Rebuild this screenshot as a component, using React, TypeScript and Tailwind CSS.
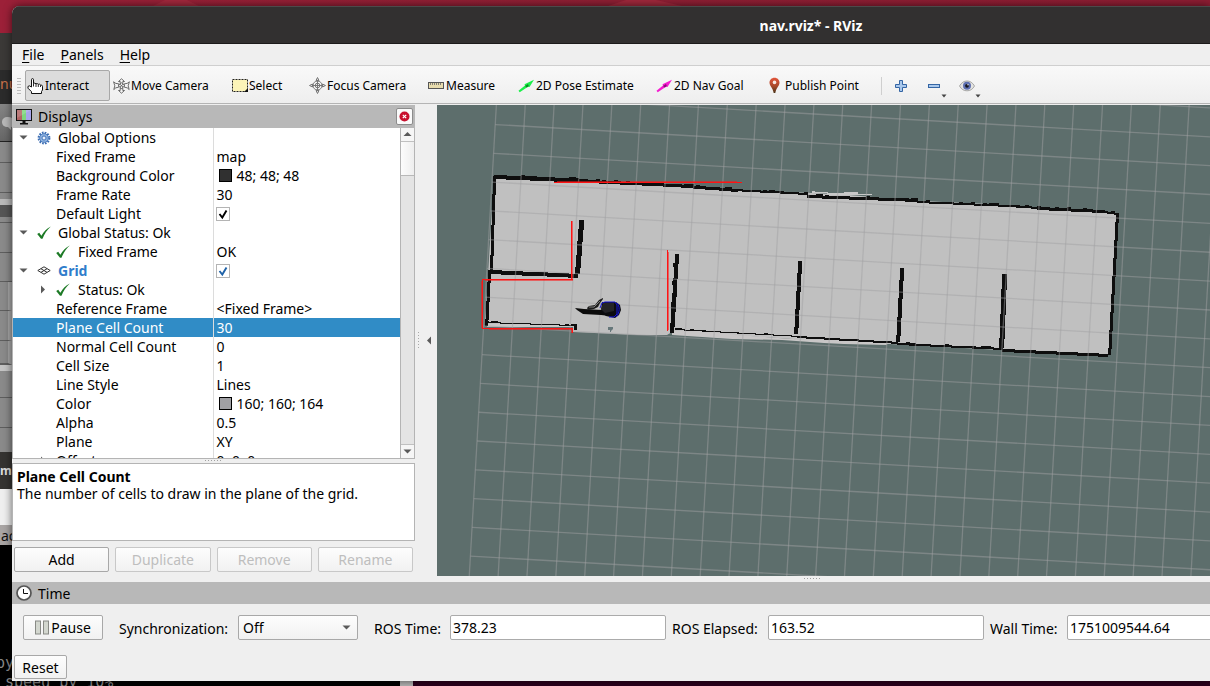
import React from "react";

/* ---------- small icons ---------- */

function HandIcon() {
  return (
    <svg width="16" height="16" viewBox="0 0 16 16" className="shrink-0">
      <path
        d="M4.500 9V1.600a1 1 0 0 1 2 0V5.500q1.300-.9 2.500.3 1.400-.7 2.300.5 1.400-.6 2.200.7 1.600-.3 2 1.200V12l-1 1.500v2H4.500v-1.800L1 10.200Q.2 8 2.300 7.800z"
        fill="#fff"
        stroke="#111"
        strokeWidth="1"
      />
      <path d="M9 6v3M11.300 6.500V9M13.500 7.200V9M6.500 5.500V8.500" stroke="#111" strokeWidth="0.900" />
    </svg>
  );
}

function MoveIcon() {
  return (
    <svg width="17" height="16" viewBox="0 0 17 16" className="shrink-0" fill="#f4f4f4" stroke="#5c5c5c" strokeWidth="0.900">
      <path d="M8.500.8l3 2.700H9.800v2.300H7.200V3.500H5.500zM8.500 15.200l3-2.700H9.800v-2.300H7.200v2.300H5.500z" />
      <path d="M.6 3.800l2.200 1.600 2.900.4v3.400l-2.900.6L.8 11.600 1.800 7.800zM16.400 3.800l-2.200 1.600-2.900.4v3.400l2.900.6 2 1.800-1-3.800z" />
      <path d="M8.500 4.800l3.200 2.900-3.200 2.900-3.200-2.900z" />
      <path d="M6.900 6.200l3.200 3M10.100 6.200l-3.200 3" />
    </svg>
  );
}

function SelectIcon() {
  return (
    <svg width="17" height="14" viewBox="0 0 17 14" className="shrink-0">
      <rect x="1.500" y="0.500" width="15" height="12" fill="#fcf4b8" stroke="#222" strokeDasharray="2 1" />
      <path d="M17 9v4h-4z" fill="#111" />
    </svg>
  );
}

function FocusIcon() {
  return (
    <svg width="17" height="17" viewBox="0 0 17 17" className="shrink-0" fill="none" stroke="#777" strokeWidth="1">
      <circle cx="8.500" cy="8.500" r="4.500" />
      <circle cx="8.500" cy="8.500" r="2.300" />
      <path d="M8.500 3v11M3 8.500h11" />
      <path d="M8.500.5L7 3.500h3zM8.500 16.500L7 13.500h3zM.5 8.500L3.500 7v3zM16.500 8.500L13.500 7v3z" fill="#ddd" />
    </svg>
  );
}

function RulerIcon() {
  return (
    <svg width="16" height="7" viewBox="0 0 16 7" className="shrink-0">
      <rect x="0.500" y="0.500" width="15" height="6" fill="#e8dcae" stroke="#555" />
      <path d="M2.500 1v2M4.500 1v2M6.500 1v2M8.500 1v2M10.500 1v2M12.500 1v2" stroke="#666" strokeWidth="0.800" />
    </svg>
  );
}

function ArrowIcon({ color, dark }: { color: string; dark: string }) {
  return (
    <svg width="17" height="14" viewBox="0 0 17 14" className="shrink-0">
      <path d="M.5 11.800L7 6.500 6.500 5.200 16 .8 11.500 8 10 7.700 1.700 13.300z" fill={color} />
      <path d="M7 7l3-2 .8 2-2 1.600z" fill={dark} />
    </svg>
  );
}

function PinIcon() {
  return (
    <svg width="16" height="17" viewBox="0 0 16 17" className="shrink-0">
      <defs>
        <linearGradient id="pin" x1="0" y1="0" x2="0" y2="1">
          <stop offset="0" stopColor="#e2553a" />
          <stop offset="0.550" stopColor="#a8492a" />
          <stop offset="1" stopColor="#4a3418" />
        </linearGradient>
      </defs>
      <path d="M7.500.8c3 0 5 2.200 5 5 0 3-3.300 5-4.200 10.200H6.700C5.800 10.800 2.500 8.800 2.500 5.800c0-2.800 2-5 5-5z" fill="url(#pin)" />
      <circle cx="7.500" cy="5.400" r="1.800" fill="#f6e8e2" />
    </svg>
  );
}

function PlusIcon() {
  return (
    <svg width="14" height="14" viewBox="0 0 14 14">
      <path d="M5.500 1.500h3v4h4v3h-4v4h-3v-4h-4v-3h4z" fill="#a9c8ec" stroke="#3465a4" />
    </svg>
  );
}

function MinusIcon() {
  return (
    <svg width="14" height="14" viewBox="0 0 14 14">
      <rect x="1.500" y="5.500" width="11" height="3" fill="#a9c8ec" stroke="#3465a4" />
    </svg>
  );
}

function EyeIcon() {
  return (
    <svg width="16" height="12" viewBox="0 0 16 12">
      <path d="M.5 6C2.500 2.500 5 1 8 1s5.500 1.500 7.500 5C13.500 9.500 11 10.800 8 10.800S2.500 9.500.5 6z" fill="#e4e4e2" stroke="#a6a6a4" />
      <circle cx="8" cy="5.800" r="4" fill="#5d6fb0" />
      <circle cx="8" cy="5.800" r="1.900" fill="#15151f" />
      <circle cx="9" cy="4.800" r="0.700" fill="#fff" />
    </svg>
  );
}

function DisplaysIcon() {
  return (
    <svg width="16" height="16" viewBox="0 0 16 16">
      <rect x="0.500" y="0.500" width="15" height="11" fill="#111" stroke="#111" />
      <rect x="1" y="1" width="5" height="10" fill="#b06464" />
      <rect x="6" y="1" width="4" height="10" fill="#7ed67e" />
      <rect x="10" y="1" width="5" height="10" fill="#a8a4ea" />
      <path d="M1 1h14L1 9z" fill="#fff" opacity="0.150" />
      <path d="M6.500 12h3v2h2.500v1.500H4V14h2.500z" fill="#111" />
    </svg>
  );
}

function ClockIcon() {
  return (
    <svg width="16" height="16" viewBox="0 0 16 16">
      <circle cx="8" cy="8" r="7" fill="#fff" stroke="#555" strokeWidth="1.700" />
      <path d="M7.500 4v4.500H12" fill="none" stroke="#111" />
    </svg>
  );
}

function GearIcon() {
  return (
    <svg width="14" height="14" viewBox="0 0 14 14">
      <circle cx="7" cy="7" r="5.400" fill="none" stroke="#3c6eb4" strokeWidth="2" strokeDasharray="1.700 1.130" />
      <circle cx="7" cy="7" r="4.400" fill="#8db2e0" stroke="#3c6eb4" strokeWidth="0.800" />
      <circle cx="7" cy="7" r="2" fill="#e8f0fa" stroke="#3c6eb4" strokeWidth="0.900" />
    </svg>
  );
}

function OkIcon() {
  return (
    <svg width="14" height="14" viewBox="0 0 14 14">
      <path d="M.2 8l2-1.300 2.200 3C7 5.500 9.500 2.500 13.800.6 10 4 7.500 8 5.500 12.800H4z" fill="#1d7a26" />
    </svg>
  );
}

function GridIcon() {
  return (
    <svg width="14" height="14" viewBox="0 0 14 14" fill="none" stroke="#333" strokeWidth="1">
      <path d="M.8 6.500L7 2.800l6.200 3.700L7 10.200zM3.900 4.700l6.200 3.700M10.100 4.700L3.900 8.400" />
    </svg>
  );
}

function Caret({ dir }: { dir: "down" | "right" | "up" | "left" }) {
  const d = {
    down: "M0.500 2.500h8L4.500 6.500z",
    up: "M0.500 6h8L4.500 2z",
    right: "M3 0.500v8L7 4.500z",
    left: "M6 0.500v8L2 4.500z",
  }[dir];
  return (
    <svg width="9" height="9" viewBox="0 0 9 9">
      <path d={d} fill="#5a5a5a" />
    </svg>
  );
}

/* ---------- toolbar ---------- */

type Tool = { label: string; icon: React.ReactNode; width: string; active?: boolean };

const tools: Tool[] = [
  { label: "Interact", icon: <HandIcon />, width: "w-[85px]", active: true },
  { label: "Move Camera", icon: <MoveIcon />, width: "w-[117px]" },
  { label: "Select", icon: <SelectIcon />, width: "w-[77px]" },
  { label: "Focus Camera", icon: <FocusIcon />, width: "w-[118px]" },
  { label: "Measure", icon: <RulerIcon />, width: "w-[89px]" },
  { label: "2D Pose Estimate", icon: <ArrowIcon color="#1cf04a" dark="#0c8a24" />, width: "w-[137px]" },
  { label: "2D Nav Goal", icon: <ArrowIcon color="#f51cd0" dark="#8a0c78" />, width: "w-[110px]" },
  { label: "Publish Point", icon: <PinIcon />, width: "w-[115px]" },
];

function Toolbar() {
  return (
    <div className="flex h-[38px] shrink-0 items-center border-b border-[#b4b4b4] bg-linear-to-b from-[#f9f9f9] to-[#eeeeee] pt-[2px] pl-[5px]">
      <div className="mr-1 h-[18px] w-1 shrink-0 bg-[radial-gradient(#b8b8b8_35%,transparent_40%)] bg-size-[2px_3px]" />
      {tools.map((t) => (
        <button
          key={t.label}
          className={
            "mr-px flex h-[31px] shrink-0 items-center rounded-xs border pl-px text-[12px] whitespace-nowrap text-black " +
            t.width +
            (t.active ? " border-[#a8a8a8] bg-[#dcdcdc]" : " border-transparent")
          }
        >
          <span className="flex w-[18px] shrink-0">{t.icon}</span>
          {t.label}
        </button>
      ))}
      <div className="mr-3 h-[18px] w-px shrink-0 bg-[#cfcfcf]" />
      <button aria-label="Add tool" className="mr-[19px] shrink-0">
        <PlusIcon />
      </button>
      <button aria-label="Remove tool" className="flex shrink-0 items-center">
        <MinusIcon />
        <span className="pt-5">
          <Tick />
        </span>
      </button>
      <button aria-label="Tool visibility" className="ml-3 flex shrink-0 items-center">
        <EyeIcon />
        <span className="pt-5">
          <Tick />
        </span>
      </button>
    </div>
  );
}

function Tick() {
  return (
    <svg width="6" height="4" viewBox="0 0 6 4">
      <path d="M0.500 0.500h5L3 3.500z" fill="#444" />
    </svg>
  );
}

/* ---------- displays tree ---------- */

type Row = {
  name: string;
  value?: string;
  caret?: "down" | "right";
  icon?: React.ReactNode;
  nested?: boolean;
  swatch?: string;
  check?: "black" | "blue";
  selected?: boolean;
  link?: boolean;
};

const rows: Row[] = [
  { name: "Global Options", caret: "down", icon: <GearIcon /> },
  { name: "Fixed Frame", value: "map" },
  { name: "Background Color", value: "48; 48; 48", swatch: "bg-[#303030]" },
  { name: "Frame Rate", value: "30" },
  { name: "Default Light", check: "black" },
  { name: "Global Status: Ok", caret: "down", icon: <OkIcon /> },
  { name: "Fixed Frame", value: "OK", icon: <OkIcon />, nested: true },
  { name: "Grid", caret: "down", icon: <GridIcon />, check: "blue", link: true },
  { name: "Status: Ok", caret: "right", icon: <OkIcon />, nested: true },
  { name: "Reference Frame", value: "<Fixed Frame>" },
  { name: "Plane Cell Count", value: "30", selected: true },
  { name: "Normal Cell Count", value: "0" },
  { name: "Cell Size", value: "1" },
  { name: "Line Style", value: "Lines" },
  { name: "Color", value: "160; 160; 164", swatch: "bg-[#a0a0a4]" },
  { name: "Alpha", value: "0.5" },
  { name: "Plane", value: "XY" },
  { name: "Offset", value: "0; 0; 0", caret: "right" },
];

function CheckBox({ tone, label }: { tone: "black" | "blue"; label: string }) {
  return (
    <label className="relative block size-[14px]">
      <input
        type="checkbox"
        defaultChecked
        aria-label={label}
        className="peer block size-[14px] appearance-none border border-[#b4b4b4] bg-white"
      />
      <svg
        viewBox="0 0 14 14"
        className={"pointer-events-none absolute inset-0 hidden size-[14px] peer-checked:block " + (tone === "black" ? "text-black" : "text-[#1f62a8]")}
      >
        <path d="M3.500 7l2.800 3.500L10.500 3.500" fill="none" stroke="currentColor" strokeWidth="1.900" />
      </svg>
    </label>
  );
}

function TreeRow({ row }: { row: Row }) {
  const top = !!row.icon && !row.nested;
  return (
    <tr className={"h-[19px] " + (row.selected ? "bg-[#308cc6] text-white" : "")}>
      <td className="w-[200px] border-r border-[#dcdcdc] p-0">
        <div className="flex h-[19px] items-center whitespace-nowrap">
          <span className={"flex shrink-0 " + (top ? "w-6 pl-[6px]" : "w-[43px] pl-[25px]")}>
            {row.caret && (
              <button aria-label={"Toggle " + row.name} className="block">
                <Caret dir={row.caret} />
              </button>
            )}
          </span>
          {row.icon && <span className={"flex shrink-0 " + (row.nested ? "w-[22px]" : "w-[21px]")}>{row.icon}</span>}
          <span className={row.link ? "font-bold text-[#2f7dcb]" : ""}>{row.name}</span>
        </div>
      </td>
      <td className="p-0 pl-[2px]">
        <div className="flex h-[19px] items-center whitespace-nowrap">
          {row.check && <CheckBox tone={row.check} label={row.name} />}
          {row.swatch && <span className={"mr-1 ml-[3px] size-[13px] border border-black " + row.swatch} />}
          {row.value && <span className="pl-px">{row.value}</span>}
        </div>
      </td>
    </tr>
  );
}

function DisplaysPanel() {
  return (
    <section className="flex w-[403px] shrink-0 flex-col">
      <header className="flex h-[23px] shrink-0 items-center bg-[#b8b8b8] pr-[2px] pl-1">
        <DisplaysIcon />
        <h2 className="ml-[6px] flex-1">Displays</h2>
        <button aria-label="Close Displays" className="flex size-[17px] items-center justify-center rounded-xs border border-[#8c8c8c] bg-[#fafafa]">
          <svg width="11" height="11" viewBox="0 0 11 11">
            <circle cx="5.500" cy="5.500" r="5" fill="#c8102e" />
            <path d="M3.800 3.800l3.400 3.400M7.200 3.800L3.800 7.200" stroke="#fff" strokeWidth="1.200" />
          </svg>
        </button>
      </header>

      <div className="flex min-h-0 flex-1 border-b border-l border-[#b4b4b4] bg-white">
        <div className="min-h-0 flex-1 overflow-hidden">
          <table className="w-full table-fixed border-collapse">
            <tbody>
              {rows.map((r, i) => (
                <TreeRow key={i} row={r} />
              ))}
            </tbody>
          </table>
        </div>
        <div className="flex w-[15px] flex-col border-x border-[#b4b4b4] bg-[#e4e4e4]">
          <button aria-label="Scroll up" className="flex h-[14px] items-center justify-center border-b border-[#c0c0c0] bg-[#f6f6f6]">
            <Caret dir="up" />
          </button>
          <div className="h-[34px] border-b border-[#b8b8b8] bg-linear-to-r from-[#fcfcfc] to-[#eeeeee]" />
          <div className="flex-1" />
          <button aria-label="Scroll down" className="flex h-[14px] items-center justify-center border-t border-[#c0c0c0] bg-[#f6f6f6]">
            <Caret dir="down" />
          </button>
        </div>
      </div>

      <div className="flex h-1 shrink-0 items-center justify-center">
        <Dots />
      </div>

      <div className="h-[78px] shrink-0 border border-[#b4b4b4] bg-white px-1 pt-1 leading-[17px]">
        <h3 className="font-bold">Plane Cell Count</h3>
        <p>The number of cells to draw in the plane of the grid.</p>
      </div>

      <div className="grid shrink-0 grid-cols-4 gap-[6px] px-[2px] pt-[6px] pb-1">
        {["Add", "Duplicate", "Remove", "Rename"].map((b, i) => (
          <button
            key={b}
            disabled={i > 0}
            className="h-[25px] rounded-xs border border-[#a8a8a8] bg-linear-to-b from-[#fdfdfd] to-[#f1f1f1] disabled:border-[#c8c8c8] disabled:text-[#bebebe]"
          >
            {b}
          </button>
        ))}
      </div>
    </section>
  );
}

function Dots() {
  return (
    <svg width="17" height="2" viewBox="0 0 17 2">
      {[0, 3, 6, 9, 12, 15].map((x) => (
        <rect key={x} x={x} y="0" width="1" height="1" fill="#a0a0a0" />
      ))}
    </svg>
  );
}

/* ---------- map view ---------- */

// One grid step along each rotated axis, and the leftmost anchor point.
const UX = 28.77;
const UY = 1.655;
const GX = 45;
const GY = 249.7;

// Builds a ragged wall out of short blocks, the way an occupancy grid looks.
function wall(x1: number, y1: number, x2: number, y2: number, t: number, seed: number, rough = 1) {
  const len = Math.hypot(x2 - x1, y2 - y1);
  const n = Math.max(2, Math.round(len / 3));
  const horiz = Math.abs(x2 - x1) > Math.abs(y2 - y1);
  let d = "";
  let s = seed;
  for (let i = 0; i < n; i++) {
    s = (s * 1103 + 337) % 7919;
    const j = (s % 6 === 0 ? 1 : 0) * rough;
    const x = Math.round(x1 + ((x2 - x1) * i) / n);
    const y = Math.round(y1 + ((y2 - y1) * i) / n);
    d += horiz ? `M${x} ${y - j}h4v${t + j}h-4z` : `M${x - j} ${y}h${t + j}v4h${-(t + j)}z`;
  }
  return d;
}

const walls = [
  wall(57, 70, 150, 74, 4, 11),
  wall(150, 75, 235, 79, 3, 5),
  wall(235, 79, 300, 84, 3, 23),
  wall(293, 84, 370, 88, 2, 31),
  wall(370, 90, 480, 94, 3, 17),
  wall(480, 96, 570, 100, 2, 41),
  wall(570, 100, 600, 102, 2, 13),
  wall(600, 102, 664, 105, 3, 15),
  wall(664, 106, 680, 108, 2, 1),
  wall(56, 71, 53, 165, 3, 7, 0),
  wall(51, 165, 48, 220, 3, 9, 0),
  wall(52, 165, 140, 169, 4, 19, 0),
  wall(142, 115, 138, 168, 5, 3, 0),
  wall(48, 217, 137, 220, 1, 29),
  wall(137, 219, 137, 222, 3, 2, 0),
  wall(238, 149, 233, 227, 4, 37),
  wall(238, 224, 360, 231, 1, 43),
  wall(361, 156, 357, 228, 4, 47, 0),
  wall(360, 231, 460, 237, 2, 53, 0),
  wall(463, 163, 459, 236, 4, 59, 0),
  wall(460, 238, 565, 243, 2, 61),
  wall(565, 169, 562, 242, 5, 67, 0),
  wall(565, 244, 670, 249, 3, 71, 0),
  wall(679, 108, 671, 249, 3, 73, 0),
];

// Laser returns: a solid core plus a fainter neighbouring pixel.
const scans: [number, number, number, number][] = [
  [117, 77, 188, 1],
  [134, 116, 1, 58],
  [45, 174, 91, 1],
  [45, 174, 1, 50],
  [45, 223, 91, 1],
  [135, 223, 1, 5],
  [230, 145, 1, 81],
];
const scanHalo: [number, number, number, number][] = [
  [120, 76, 180, 1],
  [135, 116, 1, 58],
  [48, 175, 88, 1],
  [44, 176, 1, 47],
  [52, 224, 84, 1],
  [134, 224, 1, 4],
  [231, 147, 1, 78],
];

function MapView() {
  const lines: React.ReactNode[] = [];
  for (let i = 0; i <= 70; i++) {
    lines.push(
      <line key={"v" + i} x1={GX + UX * i + UY * 60} y1={GY + UY * i - UX * 60} x2={GX + UX * i - UY * 30} y2={GY + UY * i + UX * 30} />
    );
  }
  for (let j = -60; j <= 30; j++) {
    lines.push(<line key={"h" + j} x1={GX - UY * j} y1={GY + UX * j} x2={GX - UY * j + UX * 70} y2={GY + UX * j + UY * 70} />);
  }
  return (
    <div className="min-w-0 flex-1 overflow-hidden bg-[#5d6e6c]">
      <svg width="100%" height="100%" role="img" aria-label="Navigation map" className="block">
        <path
          d="M57 71L150 75L293 85L350 87L400 89L436 92L440 94L550 99L680 108L672 250L565 245L453 239L400 237L355 234L340 233L290 230L235 227L230 230L200 230L136 227L136 222L48 220Z"
          fill="#c0c0c0"
        />
        <path d="M235 226h30l35 4 55 4 45 1 52 3-3 2-42-1-20-1-42-3-50-1-60-4z" fill="#c8c6c6" />
        <path d="M50 219h85v3H50z" fill="#c8c8c8" />
        <path d="M355 86h20v2h15v2h45v-1h-14v-2h-14v1h-16v-1h-13v-1z" fill="#c8c8c8" />
        <path d={walls.join("")} fill="#0e0e0e" shapeRendering="crispEdges" />
        <path d="M171 222h5v2l-2 2v1h-1v-2h-2z" fill="#66777a" />
        <g stroke="#a0a0a4" strokeOpacity="0.480" strokeWidth="1.300">
          {lines}
        </g>
        <g fill="#ff1414" fillOpacity="0.550" shapeRendering="crispEdges">
          {scanHalo.map(([x, y, w, h], i) => (
            <rect key={i} x={x} y={y} width={w} height={h} />
          ))}
        </g>
        <g fill="#ff1414" shapeRendering="crispEdges">
          {scans.map(([x, y, w, h], i) => (
            <rect key={i} x={x} y={y} width={w} height={h} />
          ))}
        </g>
        <g>
          <path d="M138 203l9 1 18 1 8 1v5l-9-1-18-1-6-4z" fill="#0b0b0b" />
          <path d="M150 203l2-2 6-1 4-5 4-2v1l-3 4-2 4-4 2-6 1z" fill="#1c1c1c" />
          <path d="M152 202h5l6-6" stroke="#8a8a8a" strokeWidth="0.900" fill="none" />
          <path d="M165 197h14l4 3 1 5-2 5-4 3-9-2-5-4z" fill="#0c0c10" />
          <path d="M166 198h11v8l-9 2-4-4z" fill="#242428" />
          <path d="M163 203l2-5 3-1h10l2 3v9l-3 3h-5M180 198c3 3 3 10-1 14" stroke="#1616d8" strokeWidth="1" fill="none" />
        </g>
      </svg>
    </div>
  );
}

/* ---------- time panel ---------- */

function TimeField({ id, label, value, labelWidth }: { id: string; label: string; value: string; labelWidth: string }) {
  return (
    <>
      <label htmlFor={id} className={"shrink-0 pt-[2px] whitespace-nowrap " + labelWidth}>
        {label}
      </label>
      <input
        id={id}
        type="text"
        defaultValue={value}
        className="mr-[6px] h-[25px] w-[216px] shrink-0 rounded-xs border border-[#ababab] bg-white px-[2px]"
      />
    </>
  );
}

function TimePanel() {
  return (
    <section className="flex h-[99px] shrink-0 flex-col">
      <header className="flex h-[22px] shrink-0 items-center bg-[#b8b8b8] pl-1">
        <ClockIcon />
        <h2 className="ml-[6px]">Time</h2>
      </header>
      <div className="flex shrink-0 items-center overflow-hidden pt-[11px] pl-[11px]">
        <button className="mr-4 flex h-[25px] w-20 shrink-0 items-center justify-center rounded-xs border border-[#a8a8a8] bg-linear-to-b from-[#fdfdfd] to-[#f1f1f1]">
          <svg width="16" height="15" viewBox="0 0 16 15">
            <rect x="0.500" y="1" width="5" height="13" fill="#d3d7cf" stroke="#888a85" />
            <rect x="8.500" y="1" width="5" height="13" fill="#d3d7cf" stroke="#888a85" />
          </svg>
          Pause
        </button>
        <label htmlFor="sync" className="w-[119px] shrink-0 pt-[2px]">
          Synchronization:
        </label>
        <span className="relative mr-4 flex shrink-0">
          <select
            id="sync"
            className="h-[25px] w-[120px] appearance-none rounded-xs border border-[#a8a8a8] bg-linear-to-b from-[#fdfdfd] to-[#f1f1f1] pl-1"
          >
            <option>Off</option>
          </select>
          <span className="pointer-events-none absolute inset-y-0 right-[7px] flex items-center">
            <Caret dir="down" />
          </span>
        </span>
        <TimeField id="ros-time" label="ROS Time:" value="378.23" labelWidth="w-[76px]" />
        <TimeField id="ros-elapsed" label="ROS Elapsed:" value="163.52" labelWidth="w-24" />
        <TimeField id="wall-time" label="Wall Time:" value="1751009544.64" labelWidth="w-[77px]" />
      </div>
      <div className="flex pt-[15px] pl-[2px]">
        <button className="h-6 w-[53px] rounded-xs border border-[#a8a8a8] bg-linear-to-b from-[#fdfdfd] to-[#f1f1f1]">Reset</button>
      </div>
    </section>
  );
}

/* ---------- desktop behind the window ---------- */

function Desktop() {
  return (
    <div aria-hidden="true" className="absolute inset-0 flex flex-col overflow-hidden bg-[#2c001e]">
      <div className="h-[33px] shrink-0 bg-linear-to-r from-[#9c2038] via-[#8f1f34] to-[#8e1d33]">
        <svg width="100%" height="33">
          <path d="M153 6L165 0h22l12 6zM608 6l18-6h30l26 6z" fill="#a82c40" opacity="0.700" />
        </svg>
      </div>
      <div className="h-[37px] w-3 shrink-0 bg-[#3b3937]" />
      <div className="flex h-[34px] w-3 shrink-0 overflow-hidden bg-[#2b2b2b] pt-1 text-[#c9734a]">nu</div>
      <div className="flex h-[38px] w-3 shrink-0 items-center overflow-hidden border-b border-[#222] bg-linear-to-b from-[#858585] to-[#666]">
        <svg width="12" height="16" viewBox="0 0 12 16">
          <path d="M8 2c4 0 6 2 6 5s-1 5-3 5v3l-3-3c-4 0-6-2-6-5s2-5 6-5z" fill="#b8b8b8" />
        </svg>
      </div>
      <div className="flex h-[310px] w-3 shrink-0 flex-col bg-[#8a8a8a]">
        <div className="h-[21px] border-b border-[#5e5e5e]" />
        <div className="h-[30px] border-b border-[#5e5e5e]" />
        <div className="mt-[6px] h-[6px] bg-[#b9b9b9]" />
        <div className="h-3 bg-[#555]" />
        <div className="h-[6px] border-b border-[#5e5e5e]" />
        <div className="h-[30px] border-b border-[#5e5e5e]" />
        <div className="h-[29px] border-b border-[#5e5e5e]" />
        <div className="h-[29px] border-r-4 border-b border-r-[#a8a8a8] border-b-[#5e5e5e]" />
        <div className="h-[30px] border-r-4 border-b border-r-[#a8a8a8] border-b-[#5e5e5e]" />
        <div className="h-[24px] border-r-4 border-b-2 border-r-[#a8a8a8] border-b-[#5e5e5e]" />
        <div className="h-[6px] bg-[#c4c4c4]" />
        <div className="h-[27px] border-b border-[#5e5e5e]" />
        <div className="h-[30px] border-b border-[#5e5e5e]" />
      </div>
      <div className="flex h-[37px] w-3 shrink-0 items-center overflow-hidden bg-[#353331] text-[12px] font-bold text-[#ddd]">ma</div>
      <div className="h-9 w-3 shrink-0 bg-[#efefef]" />
      <div className="flex h-5 w-3 shrink-0 items-center overflow-hidden bg-[#a9a5a4] pl-px text-[#111]">ac</div>
      <div className="flex min-h-0 flex-1">
        <div className="w-[400px] overflow-hidden bg-black pt-[109px] font-['DejaVu_Sans_Mono',monospace] text-[15px] leading-[19px] whitespace-pre text-[#8a8a8a]">
          <div className="-ml-1">py</div>
          <div className="-ml-1"> speed by 10%</div>
        </div>
        <div className="w-[13px] bg-[#b5b5b5]" />
      </div>
    </div>
  );
}

/* ---------- application ---------- */

export default function App() {
  return (
    <div className="relative h-screen overflow-hidden font-['Noto_Sans','Open_Sans',sans-serif] text-[14px] leading-[19px] text-black">
      <Desktop />
      <div className="relative flex h-full flex-col pt-[6px] pb-[5px] pl-3">
        <main className="flex min-h-0 flex-1 flex-col overflow-hidden rounded-tl-lg bg-[#efefef] shadow-[0_0_8px_rgba(0,0,0,0.6)]">
          <div className="flex h-[38px] shrink-0 items-center justify-center border-t border-b border-t-[#4c4a4a] border-b-[#1c1b1b] bg-[#323030] pl-[400px]">
            <h1 className="font-bold text-white">nav.rviz* - RViz</h1>
          </div>
          <nav className="flex h-[22px] shrink-0 items-center gap-4 border-b border-[#cfcfcf] pl-[10px]">
            {["File", "Panels", "Help"].map((m) => (
              <button key={m}>
                <span className="underline underline-offset-2">{m[0]}</span>
                {m.slice(1)}
              </button>
            ))}
          </nav>
          <Toolbar />
          <div className="flex min-h-0 flex-1 pt-px">
            <DisplaysPanel />
            <div className="flex w-[22px] shrink-0 items-center pl-[3px]">
              <div className="h-[17px] w-px bg-[repeating-linear-gradient(#a8a8a8_0_1px,transparent_1px_3px)]" />
              <button aria-label="Collapse panel" className="ml-[6px]">
                <Caret dir="left" />
              </button>
            </div>
            <MapView />
          </div>
          <div className="flex h-[6px] shrink-0 items-center justify-center pl-[402px]">
            <Dots />
          </div>
          <TimePanel />
        </main>
      </div>
    </div>
  );
}
